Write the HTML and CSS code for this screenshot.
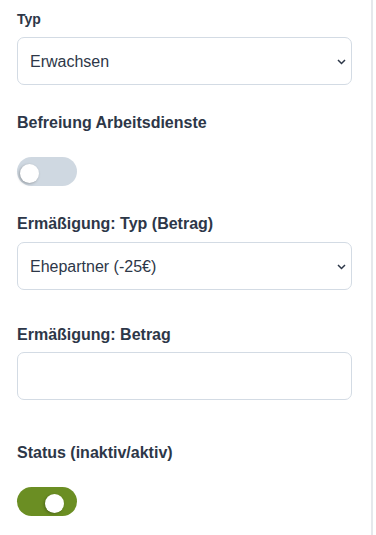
FILE: index.html
```html
<!DOCTYPE html>
<html lang="de">
<head>
<meta charset="utf-8">
<title>Mitglied</title>
<link rel="stylesheet" href="styles.css">
</head>
<body>
<div class="panel">
  <form class="form">
    <div class="field field--select field--after-28">
      <label class="field-label field-label--small" for="typ">Typ</label>
      <div class="select-wrap">
        <select id="typ" class="control select">
          <option>Erwachsen</option>
        </select>
        <svg class="chevron" width="9" height="6" viewBox="0 0 9 6" aria-hidden="true"><path d="M1 1l3.5 3.5L8 1" fill="none" stroke="#2d3748" stroke-width="1.5"/></svg>
      </div>
    </div>

    <div class="field field--toggle field--after-28">
      <span class="field-label">Befreiung Arbeitsdienste</span>
      <label class="switch">
        <input type="checkbox" class="switch-input">
        <span class="switch-track"></span>
      </label>
    </div>

    <div class="field field--select field--after-35">
      <label class="field-label" for="erm">Ermäßigung: Typ (Betrag)</label>
      <div class="select-wrap">
        <select id="erm" class="control select">
          <option>Ehepartner (-25€)</option>
        </select>
        <svg class="chevron" width="9" height="6" viewBox="0 0 9 6" aria-hidden="true"><path d="M1 1l3.5 3.5L8 1" fill="none" stroke="#2d3748" stroke-width="1.5"/></svg>
      </div>
    </div>

    <div class="field field--input field--after-43">
      <label class="field-label" for="betrag">Ermäßigung: Betrag</label>
      <input id="betrag" class="control" type="text">
    </div>

    <div class="field field--toggle">
      <span class="field-label">Status (inaktiv/aktiv)</span>
      <label class="switch">
        <input type="checkbox" class="switch-input" checked>
        <span class="switch-track"></span>
      </label>
    </div>
  </form>
</div>
</body>
</html>
```
FILE: styles.css
```css
html, body {
  margin: 0;
  padding: 0;
  background: #ffffff;
}

body {
  font-family: "Liberation Sans", Arial, sans-serif;
  color: #2d3748;
  display: flex;
}

.panel {
  width: 373px;
  min-height: 535px;
  border-right: 2px solid #e5e8ec;
  box-sizing: border-box;
  flex: none;
}

.form {
  padding: 9px 19px 0 17px;
  display: flex;
  flex-direction: column;
}

.field {
  display: flex;
  flex-direction: column;
}

.field--select { gap: 8px; }
.field--input { gap: 7px; }
.field--toggle { gap: 24px; }

.field--after-28 { margin-bottom: 28px; }
.field--after-35 { margin-bottom: 35px; }
.field--after-43 { margin-bottom: 43px; }

.field-label {
  font-size: 16px;
  line-height: 20px;
  font-weight: 700;
  color: #2d3748;
}

.field-label--small {
  font-size: 14px;
}

.select-wrap {
  position: relative;
}

.control {
  display: block;
  width: 100%;
  height: 48px;
  box-sizing: border-box;
  margin: 0;
  padding: 0 28px 0 12px;
  border: 1px solid #d3dbe4;
  border-radius: 7px;
  background: #ffffff;
  font-family: "Liberation Sans", Arial, sans-serif;
  font-size: 16px;
  color: #2d3748;
  outline: none;
}

.select {
  -webkit-appearance: none;
  appearance: none;
}

.chevron {
  position: absolute;
  right: 6px;
  top: 22px;
  pointer-events: none;
}

.switch {
  position: relative;
  display: block;
  width: 60px;
  height: 29px;
}

.switch-input {
  position: absolute;
  opacity: 0;
  width: 0;
  height: 0;
  margin: 0;
}

.switch-track {
  display: block;
  width: 60px;
  height: 29px;
  border-radius: 15px;
  background: #cfd8e1;
  position: relative;
}

.switch-track::after {
  content: "";
  position: absolute;
  left: 3px;
  top: 7px;
  width: 19px;
  height: 19px;
  border-radius: 50%;
  background: #ffffff;
  box-shadow: -1px 1px 3px rgba(0, 0, 0, 0.28);
}

.switch-input:checked + .switch-track {
  background: #6b8e23;
}

.switch-input:checked + .switch-track::after {
  left: 28px;
}
```
